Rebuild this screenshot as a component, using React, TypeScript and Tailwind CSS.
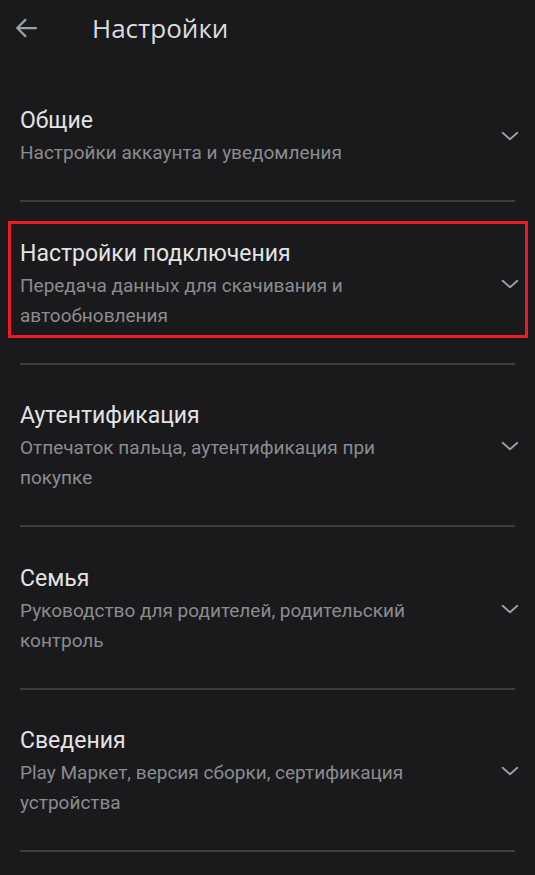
import React from 'react';

interface Section {
  title: string;
  subtitle: string;
  highlighted?: boolean;
}

const sections: Section[] = [
  { title: 'Общие', subtitle: 'Настройки аккаунта и уведомления' },
  {
    title: 'Настройки подключения',
    subtitle: 'Передача данных для скачивания и автообновления',
    highlighted: true,
  },
  { title: 'Аутентификация', subtitle: 'Отпечаток пальца, аутентификация при покупке' },
  { title: 'Семья', subtitle: 'Руководство для родителей, родительский контроль' },
  { title: 'Сведения', subtitle: 'Play Маркет, версия сборки, сертификация устройства' },
];

const Chevron = () => (
  <svg width="22" height="22" viewBox="0 0 24 24" fill="none" className="shrink-0">
    <path d="M4 8.5l8 7 8-7" stroke="#9aa0a6" strokeWidth="2" strokeLinecap="round" strokeLinejoin="round" />
  </svg>
);

const SettingsItem: React.FC<{ section: Section }> = ({ section }) => (
  <div className="relative">
    <div className="flex items-center pl-5 pr-[14px] pt-[34.5px] pb-[32px]">
      <div className="flex-1 pr-[60px]">
        <div className="text-[23px] leading-[34px] text-[#e3e3e3]">{section.title}</div>
        <div className="text-[19px] leading-[30px] text-[#8a8c8f]">{section.subtitle}</div>
      </div>
      <Chevron />
    </div>
    <div className="mx-5 h-[2px] bg-[#3d3d40]" />
    {/* red annotation frame */}
    {section.highlighted && (
      <div className="absolute left-[8px] right-[7px] top-[19px] h-[117px] border-[3px] border-[#ea1c24]" />
    )}
  </div>
);

export default function App() {
  return (
    <div
      className="min-h-[875px] w-[535px] bg-[#1a1a1d] overflow-hidden"
      style={{ fontFamily: 'Roboto, "Noto Sans", sans-serif' }}
    >
      <div className="flex h-[56px] items-center">
        <div className="flex w-[92px] pl-[11px]">
          <svg width="30" height="30" viewBox="0 0 24 24" fill="none">
            <path
              d="M20 12H5M11.5 5.5L5 12l6.5 6.5"
              stroke="#9aa0a6"
              strokeWidth="1.8"
              strokeLinecap="round"
              strokeLinejoin="round"
            />
          </svg>
        </div>
        <h1 className="text-[26px] font-normal text-[#dcdcdf]" style={{ fontFamily: '"Open Sans", Roboto, sans-serif' }}>
          Настройки
        </h1>
      </div>
      <div className="mt-[13.5px]">
        {sections.map((s) => (
          <SettingsItem key={s.title} section={s} />
        ))}
      </div>
    </div>
  );
}
